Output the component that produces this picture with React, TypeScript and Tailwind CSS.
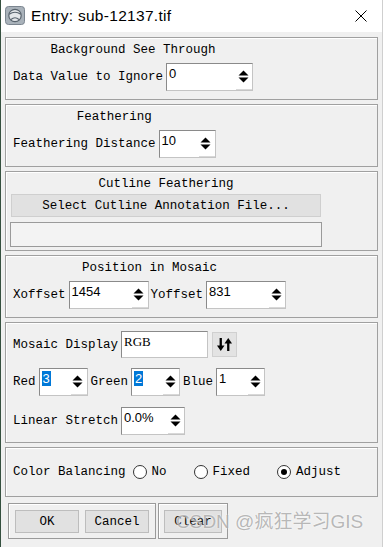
import React from "react";

const mono = "font-['Liberation_Mono',monospace] text-[12.5px] leading-[16px] text-black whitespace-pre";

function Arrows() {
  return (
    <svg width="11" height="13" viewBox="0 0 11 13">
      <polygon points="0.5,5.5 5.5,0.5 10.5,5.5" fill="#000" />
      <polygon points="0.5,7.5 10.5,7.5 5.5,12.5" fill="#000" />
    </svg>
  );
}

function Spin({ w, value, sel }: { w: string; value: string; sel?: boolean }) {
  return (
    <div className={`flex h-[28px] shrink-0 border border-[#8a8a8a] border-b-[#c4c4c4] border-r-[#c4c4c4] bg-white ${w}`}>
      <div className="flex-1 pl-[2px] pt-[2px] font-['Liberation_Sans',sans-serif] text-[13px] leading-[16px] text-black">
        {sel ? <span className="bg-[#0078d7] px-[1px] text-white">{value}</span> : value}
      </div>
      <div className="flex w-[16px] items-center justify-center border-b border-[#d8d8d8] pr-[2px]">
        <Arrows />
      </div>
    </div>
  );
}

function Label({ children, className = "" }: { children: React.ReactNode; className?: string }) {
  return <span className={`${mono} ${className}`}>{children}</span>;
}

function Radio({ sel, label, className = "" }: { sel?: boolean; label: string; className?: string }) {
  return (
    <div className={`flex items-center ${className}`}>
      <span className="flex h-[14px] w-[14px] items-center justify-center rounded-full border border-[#333] bg-white">
        {sel && <span className="h-[6px] w-[6px] rounded-full bg-black" />}
      </span>
      <span className={`${mono} ml-[5px]`}>{label}</span>
    </div>
  );
}

const panel = "w-[373px] border border-[#a0a0a0] shadow-[inset_1px_1px_0_#ffffff]";

export default function App() {
  return (
    <div className="relative flex h-[547px] w-[383px] flex-col overflow-hidden border-l border-r border-l-[#35503f] border-r-[#cfcfcf] bg-[#f0f0f0]">
      {/* Title bar */}
      <div className="flex h-[32px] shrink-0 items-center bg-white pl-[4px]">
        <svg width="20" height="19" viewBox="0 0 20 19" className="mt-[-1px]">
          <rect x="0.5" y="0.5" width="19" height="18" rx="3" fill="#a9b2ba" stroke="#7b858f" />
          <circle cx="10" cy="9.5" r="6.2" fill="#e3e6e9" stroke="#58636d" strokeWidth="1.2" />
          <path d="M4.2 8.2 Q10 4.2 15.8 8.2" fill="none" stroke="#58636d" strokeWidth="1.1" />
          <path d="M6 13.5 Q10 10 14 13.5" fill="none" stroke="#58636d" strokeWidth="1.1" />
        </svg>
        <span className="ml-[6px] font-['Liberation_Sans',sans-serif] text-[15.5px] tracking-[0.3px] text-black">
          Entry: sub-12137.tif
        </span>
        <svg width="12" height="12" viewBox="0 0 12 12" className="ml-auto mr-[15px]">
          <path d="M0.5 0.5 L11.5 11.5 M11.5 0.5 L0.5 11.5" stroke="#000" strokeWidth="1" />
        </svg>
      </div>

      {/* Panels */}
      <div className="flex flex-col gap-[4px] pl-[4px] pt-[5px]">
        {/* Background See Through */}
        <div className={`${panel} pl-[7px] pt-[4px] pb-[8px]`}>
          <div className="flex w-fit flex-col items-center">
            <Label>Background See Through</Label>
            <div className="mt-[5px] flex items-center">
              <Label>Data Value to Ignore</Label>
              <Spin w="w-[87px] ml-[3px]" value="0" />
            </div>
          </div>
        </div>

        {/* Feathering */}
        <div className={`${panel} pl-[7px] pt-[4px] pb-[8px]`}>
          <div className="flex w-fit flex-col items-center">
            <Label>Feathering</Label>
            <div className="mt-[5px] flex items-center">
              <Label>Feathering Distance</Label>
              <Spin w="w-[57px] ml-[3px]" value="10" />
            </div>
          </div>
        </div>

        {/* Cutline Feathering */}
        <div className={`${panel} pl-[4px] pt-[4px] pb-[3px]`}>
          <div className="flex w-fit flex-col items-center">
            <Label>Cutline Feathering</Label>
            <div className="mt-[2px] flex h-[23px] w-[310px] items-center justify-center border border-[#cfcfcf] bg-[#e1e1e1]">
              <Label>Select Cutline Annotation File...</Label>
            </div>
            <div className="mt-[5px] h-[25px] w-[312px] border border-[#9a9a9a] bg-[#f3f3f3]" />
          </div>
        </div>

        {/* Position in Mosaic */}
        <div className={`${panel} pl-[7px] pt-[4px] pb-[8px]`}>
          <div className="flex w-fit flex-col items-center">
            <Label>Position in Mosaic</Label>
            <div className="mt-[5px] flex items-center">
              <Label>Xoffset</Label>
              <Spin w="w-[80px] ml-[3px]" value="1454" />
              <Label className="ml-[2px]">Yoffset</Label>
              <Spin w="w-[80px] ml-[3px]" value="831" />
            </div>
          </div>
        </div>

        {/* Mosaic Display */}
        <div className={`${panel} pl-[7px] pt-[8px] pb-[7px]`}>
          <div className="flex h-[27px] items-center">
            <Label>Mosaic Display</Label>
            <div className="ml-[3px] h-[27px] w-[87px] border border-[#8a8a8a] border-b-[#c4c4c4] border-r-[#c4c4c4] bg-white pl-[2px] pt-[2px] font-['Liberation_Serif',serif] text-[13px] leading-[16px] text-black">
              RGB
            </div>
            <div className="ml-[4px] flex h-[25px] w-[25px] items-center justify-center border border-[#d0d0d0] bg-[#e3e3e3]">
              <svg width="15" height="15" viewBox="0 0 15 15">
                <rect x="2.6" y="1" width="2.3" height="8" fill="#000" />
                <polygon points="0,8.5 7.5,8.5 3.75,14" fill="#000" />
                <rect x="10.1" y="6" width="2.3" height="8" fill="#000" />
                <polygon points="7.5,6.5 15,6.5 11.25,1" fill="#000" />
              </svg>
            </div>
          </div>
          <div className="mt-[10px] flex h-[28px] items-center">
            <Label>Red</Label>
            <Spin w="w-[49px] ml-[3px]" value="3" sel />
            <Label className="ml-[3px]">Green</Label>
            <Spin w="w-[49px] ml-[3px]" value="2" sel />
            <Label className="ml-[3px]">Blue</Label>
            <Spin w="w-[49px] ml-[3px]" value="1" />
          </div>
          <div className="mt-[11px] flex h-[28px] items-center">
            <Label>Linear Stretch</Label>
            <Spin w="w-[64px] ml-[3px]" value="0.0%" />
          </div>
        </div>

        {/* Color Balancing */}
        <div className={`${panel} flex h-[50px] items-center pl-[7px]`}>
          <Label>Color Balancing</Label>
          <Radio className="ml-[7px]" label="No" />
          <Radio className="ml-[27px]" label="Fixed" />
          <Radio className="ml-[27px]" label="Adjust" sel />
        </div>
      </div>

      {/* Bottom buttons */}
      <div className="mt-[6px] flex pl-[7px]">
        <div className="flex h-[36px] w-[148px] gap-[6px] border border-[#9a9a9a] pl-[6px] pt-[6px] shadow-[inset_1px_1px_0_#ffffff]">
          <div className="flex h-[23px] w-[64px] items-center justify-center border border-[#bdbdbd] bg-[#e1e1e1]">
            <Label>OK</Label>
          </div>
          <div className="flex h-[23px] w-[64px] items-center justify-center border border-[#bdbdbd] bg-[#e1e1e1]">
            <Label>Cancel</Label>
          </div>
        </div>
        <div className="ml-[2px] flex h-[36px] w-[70px] border border-[#9a9a9a] pl-[5px] pt-[6px] shadow-[inset_1px_1px_0_#ffffff]">
          <div className="flex h-[23px] w-[58px] items-center justify-center border border-[#bdbdbd] bg-[#e1e1e1]">
            <Label>Clear</Label>
          </div>
        </div>
      </div>

      {/* Watermark */}
      <div className="pointer-events-none absolute left-[175px] top-[511px] whitespace-nowrap font-['Liberation_Sans','Noto_Sans_CJK_SC',sans-serif] text-[19px] leading-[22px] text-[#9a9a9a]/70 [text-shadow:0_0_2px_#ffffff]">
        CSDN @疯狂学习GIS
      </div>
    </div>
  );
}
